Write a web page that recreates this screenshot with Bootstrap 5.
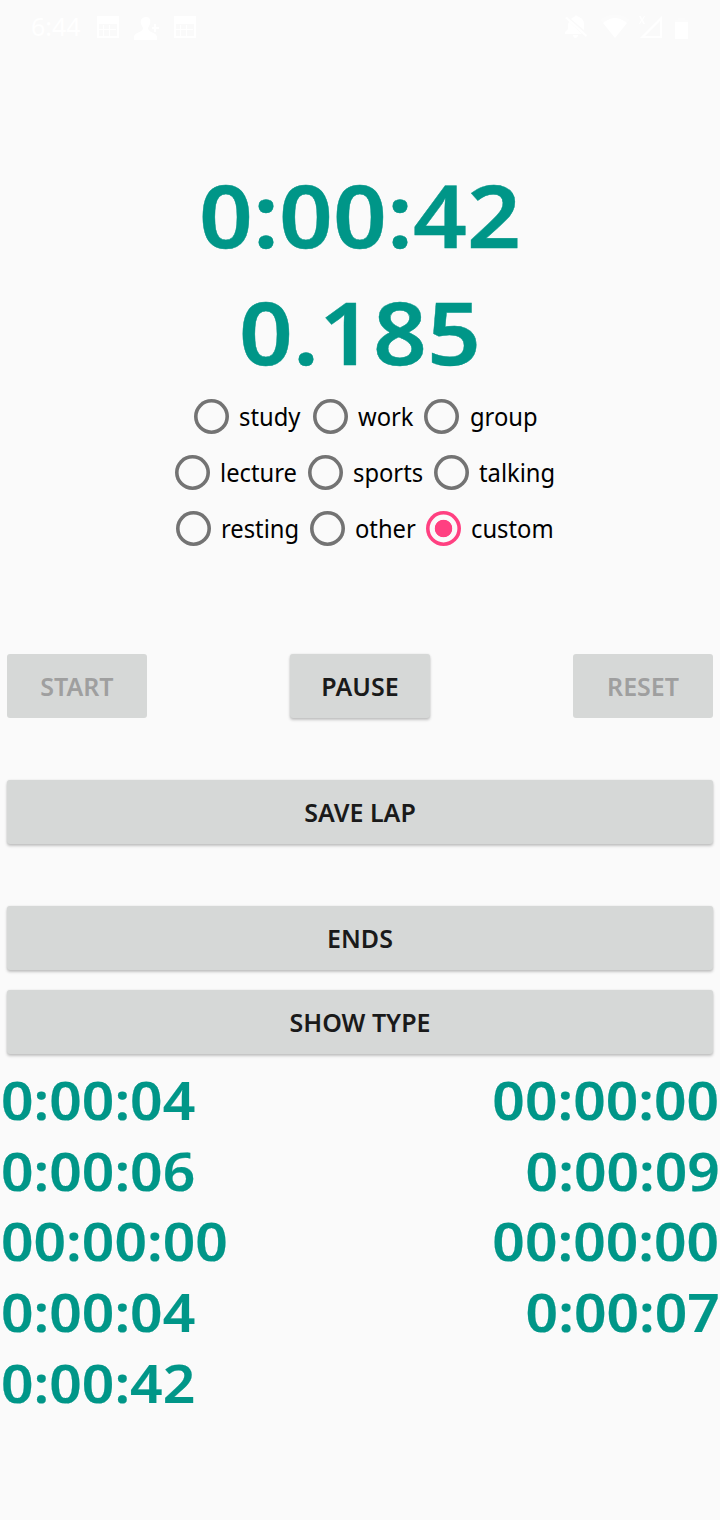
<!DOCTYPE html>
<html lang="en">
<head>
<meta charset="utf-8">
<meta name="viewport" content="width=device-width, initial-scale=1">
<title>Stopwatch</title>
<link href="https://cdn.jsdelivr.net/npm/bootstrap@5.3.0/dist/css/bootstrap.min.css" rel="stylesheet">
<style>
  body { background: #fafafa; color: #111; font-family: "Noto Sans", sans-serif; min-height: 1520px; overflow-x: hidden; }
  .statusbar { height: 54px; padding: 0 32px 0 31px; color: #fff; font-size: 25px; }
  .statusbar svg { display: block; fill: #fff; }
  .teal { color: #009688; font-weight: 600; white-space: nowrap; }
  .clock { margin-top: 102px; font-size: 87px; line-height: 117px; transform: scaleX(1.084); -webkit-text-stroke: .4px #009688; }
  .types { margin-top: -2px; font-size: 25px; line-height: 57px; color: #000; }
  .types .choice { height: 56px; white-space: nowrap; }
  .types .choice span { transform: scaleX(.95); transform-origin: left; }
  .types .form-check-input { width: 35px; height: 35px; margin: 0 10.5px 0 0; border: 0; box-shadow: inset 0 0 0 3.6px #737373; background: none; flex: none; }
  .types .form-check-input:checked { box-shadow: inset 0 0 0 3.6px #ff4081; background: radial-gradient(circle, #ff4081 8.4px, transparent 9.1px); }
  .w1 { width: 119px } .w2 { width: 111.5px } .w3 { width: 112px }
  .w4 { width: 133px } .w5 { width: 126px } .w6 { width: 121px }
  .w7 { width: 134px } .w8 { width: 116px } .w9 { width: 129px }
  .key { height: 64px; border: 0; border-radius: 3px; background: #d6d8d7; color: #1a1a1a; font-size: 25px; font-weight: 600; padding: 0; line-height: 65px; box-shadow: 0 2px 3px rgba(0,0,0,.22), 0 0 2px rgba(0,0,0,.1); }
  .key:disabled { background: #d6d8d7; color: #9f9f9f; opacity: 1; box-shadow: none; }
  .key-sm { width: 140.5px; }
  .controls { margin-top: 98px; padding: 0 6.7px; }
  .laps { margin-top: 11px; padding: 0 .6px; font-size: 53px; line-height: 70.7px; -webkit-text-stroke: .2px #009688; }
  .laps span { transform: scaleX(1.074); transform-origin: left; }
  .laps span + span { transform-origin: right; }
</style>
</head>
<body>
<header class="statusbar d-flex align-items-center">
  <span>6:44</span>
  <svg class="ms-3" width="22" height="22" viewBox="0 0 22 22"><path fill-rule="evenodd" d="M0 0h22v22H0zM2 8v12h18V8zM6 9h1v4h5V9h1v4h6v1h-6v6h-1v-6H7v6H6v-6H2v-1h4z"/></svg>
  <svg style="margin:3px 0 0 15px" width="26" height="23" viewBox="0 0 26 23"><path d="M12 0c4 0 5 3 4 7l-2 4c0 5 9 4 9 9v3H0v-3c0-5 9-4 9-9L7 7c-1-4 1-7 5-7zM20 7h2v3h3v2h-3v3h-2v-3h-2v-2h2z"/></svg>
  <svg style="margin-left:14px" width="22" height="22" viewBox="0 0 22 22"><path fill-rule="evenodd" d="M0 0h22v22H0zM2 8v12h18V8zM6 9h1v4h5V9h1v4h6v1h-6v6h-1v-6H7v6H6v-6H2v-1h4z"/></svg>
  <svg class="ms-auto" width="24" height="24" viewBox="0 0 24 24"><path d="M5 7l13 12H1v-2l3-3V9zM7 4c2-2 4-2 5-4 1 2 8 2 8 9v6L7 4zM9 20h5c0 4-5 4-5 0zM3 2l20 18-1 2L1 3z"/></svg>
  <svg style="margin-left:12px" width="30" height="24" viewBox="0 0 30 24"><path d="M3 8Q15-2 27 8L15 23z"/><path opacity=".3" d="M0 5Q15-6 30 5l-3 3Q15-2 3 8z"/></svg>
  <svg style="margin-left:9px" width="24" height="24" viewBox="0 0 24 24"><path fill-rule="evenodd" d="M1 23L23 1v22zM6 21h15V6zM0 1h2l1 3 2-3h1L4 5l2 4H4L3 6 1 9H0l2-4z"/></svg>
  <svg style="margin-left:12px" width="13" height="23" viewBox="0 0 13 23"><path opacity=".3" d="M3 2h7v2h3v4H0V4h3z"/><path d="M0 6h13v17H0z"/></svg>
</header>

<main>
  <div class="clock teal text-center"><div>0:00:42</div><div>0.185</div></div>

  <div class="types">
    <div class="d-flex" style="padding-left:193.5px">
      <label class="choice d-flex align-items-center w1"><input class="form-check-input" type="radio" name="kind"><span>study</span></label>
      <label class="choice d-flex align-items-center w2"><input class="form-check-input" type="radio" name="kind"><span>work</span></label>
      <label class="choice d-flex align-items-center w3"><input class="form-check-input" type="radio" name="kind"><span>group</span></label>
    </div>
    <div class="d-flex" style="padding-left:174.5px">
      <label class="choice d-flex align-items-center w4"><input class="form-check-input" type="radio" name="kind"><span>lecture</span></label>
      <label class="choice d-flex align-items-center w5"><input class="form-check-input" type="radio" name="kind"><span>sports</span></label>
      <label class="choice d-flex align-items-center w6"><input class="form-check-input" type="radio" name="kind"><span>talking</span></label>
    </div>
    <div class="d-flex" style="padding-left:175.7px">
      <label class="choice d-flex align-items-center w7"><input class="form-check-input" type="radio" name="kind"><span>resting</span></label>
      <label class="choice d-flex align-items-center w8"><input class="form-check-input" type="radio" name="kind"><span>other</span></label>
      <label class="choice d-flex align-items-center w9"><input class="form-check-input" type="radio" name="kind" checked><span>custom</span></label>
    </div>
  </div>

  <div class="controls">
    <div class="d-flex justify-content-between">
      <button class="btn key key-sm" disabled>START</button>
      <button class="btn key key-sm">PAUSE</button>
      <button class="btn key key-sm" disabled>RESET</button>
    </div>
    <button class="btn key w-100 d-block" style="margin-top:62px">SAVE LAP</button>
    <button class="btn key w-100 d-block" style="margin-top:62px">ENDS</button>
    <button class="btn key w-100 d-block" style="margin-top:20px">SHOW TYPE</button>
  </div>

  <div class="laps teal">
    <div class="d-flex justify-content-between"><span>0:00:04</span><span>00:00:00</span></div>
    <div class="d-flex justify-content-between"><span>0:00:06</span><span>0:00:09</span></div>
    <div class="d-flex justify-content-between"><span>00:00:00</span><span>00:00:00</span></div>
    <div class="d-flex justify-content-between"><span>0:00:04</span><span>0:00:07</span></div>
    <div class="d-flex justify-content-between"><span>0:00:42</span></div>
  </div>
</main>
<script src="https://cdn.jsdelivr.net/npm/bootstrap@5.3.0/dist/js/bootstrap.bundle.min.js"></script>
</body>
</html>
